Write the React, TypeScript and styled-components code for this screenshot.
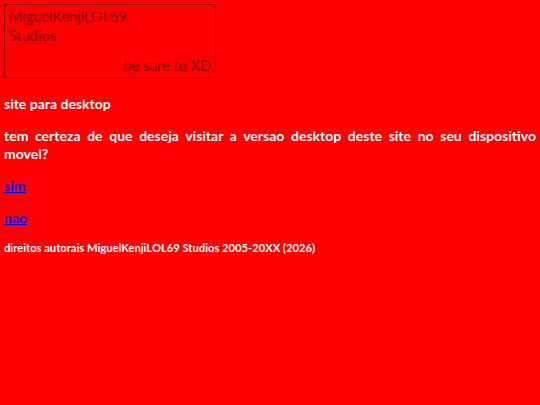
import styled, { createGlobalStyle } from 'styled-components';

const GlobalStyle = createGlobalStyle`
  body {
    margin: 4px;
    background: #ff0000;
    font-family: "Comic Sans MS", "Lato", "Noto Sans", sans-serif;
  }
`;

const LogoBox = styled.div`
  width: 202px;
  height: 68px;
  padding: 2px 4px;
  border: 1px solid #8a0000;
  color: #8a0000;
  font-size: 14.5px;
  line-height: 19px;
  display: flex;
  flex-direction: column;
  justify-content: space-between;
`;

const LogoName = styled.div``;

const Slogan = styled.div`
  text-align: right;
`;

const Title = styled.h1`
  font-size: 14px;
  font-weight: bold;
  color: #ffffff;
  margin: 17px 0 0;
  line-height: 18px;
`;

const Question = styled.p`
  font-size: 14px;
  font-weight: bold;
  color: #ffffff;
  margin: 14px 0 0;
  line-height: 18px;
  text-align: justify;
`;

const Choice = styled.a`
  display: block;
  font-size: 14px;
  font-weight: bold;
  color: #0000ee;
  margin-top: 14px;
  line-height: 18px;
`;

const Footer = styled.p`
  font-size: 11.2px;
  font-weight: bold;
  color: #ffffff;
  margin: 14px 0 0;
  line-height: 14px;
`;

export default function App() {
  return (
    <>
      <GlobalStyle />
      <LogoBox>
        <LogoName>
          MiguelKenjiLOL69
          <br />
          Studios
        </LogoName>
        <Slogan>be sure to XD</Slogan>
      </LogoBox>
      <Title>site para desktop</Title>
      <Question>
        tem certeza de que deseja visitar a versao desktop deste site no seu dispositivo movel?
      </Question>
      <Choice href="#">sim</Choice>
      <Choice href="#">nao</Choice>
      <Footer>direitos autorais MiguelKenjiLOL69 Studios 2005-20XX (2026)</Footer>
    </>
  );
}
